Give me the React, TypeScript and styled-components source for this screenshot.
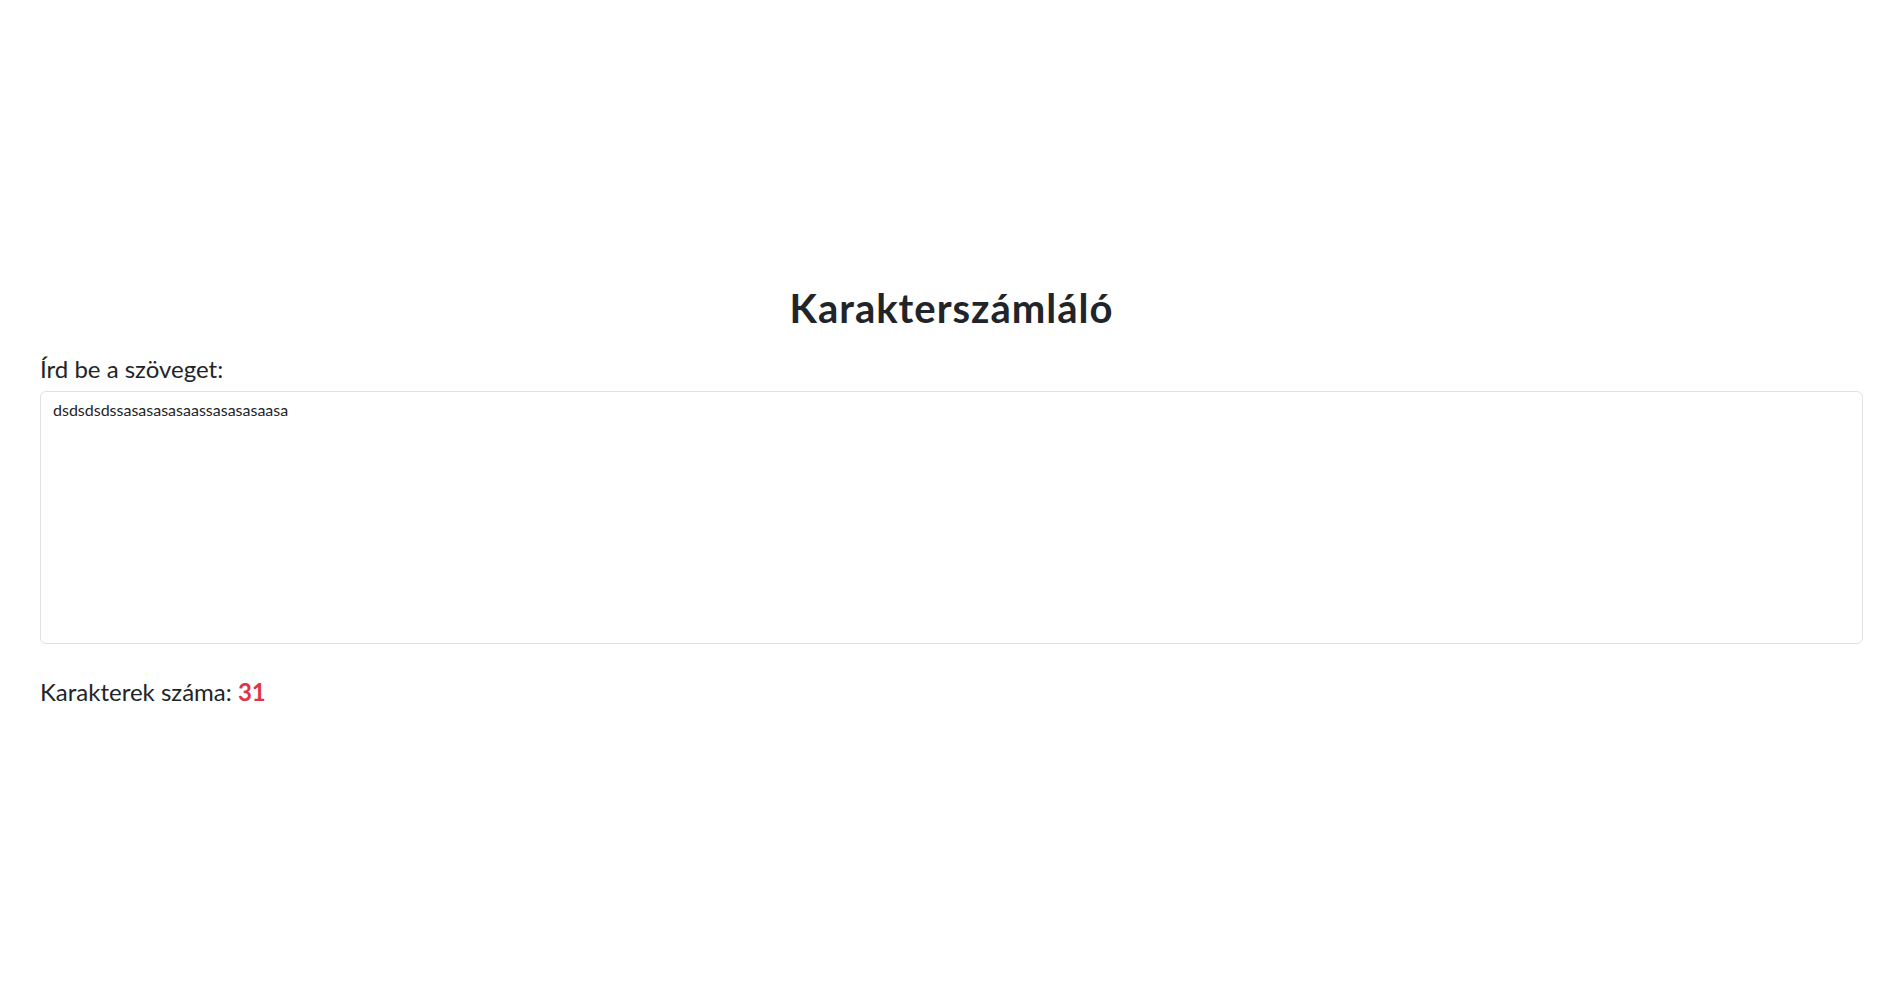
import { FC, useState } from 'react'
import styled, { createGlobalStyle } from 'styled-components'

const GlobalStyle = createGlobalStyle`
  html, body {
    margin: 0;
    padding: 0;
    background: #ffffff;
  }
  body {
    font-family: Lato, 'Noto Sans', sans-serif;
    color: #212529;
  }
  * {
    box-sizing: border-box;
  }
`

const App: FC = () => {
  const [text, setText] = useState('dsdsdsdssasasasasaassasasasaasa')

  return (
    <>
      <GlobalStyle />
      <Page>
        <Title>Karakterszámláló</Title>
        <Label htmlFor='szoveg'>Írd be a szöveget:</Label>
        <TextBox
          id='szoveg'
          value={text}
          onChange={e => setText(e.target.value)}
        />
        <Counter>
          Karakterek száma: <Count>{text.length}</Count>
        </Counter>
      </Page>
    </>
  )
}

export default App

const Page = styled.div`
  display: flex;
  flex-direction: column;
  padding: 284px 40px 0 40px;
`

const Title = styled.h1`
  margin: 0 0 19px 0;
  font-size: 40px;
  font-weight: 700;
  line-height: 48px;
  letter-spacing: 1px;
  text-align: center;
`

const Label = styled.label`
  font-size: 24px;
  line-height: 36px;
  margin-bottom: 4px;
`

const TextBox = styled.textarea`
  width: 100%;
  height: 253px;
  padding: 6px 12px;
  border: 1px solid #dee2e6;
  border-radius: 6px;
  font-family: inherit;
  font-size: 16px;
  line-height: 1.5;
  color: #212529;
  resize: none;
  outline: none;
`

const Counter = styled.p`
  margin: 30px 0 0 0;
  font-size: 24px;
  line-height: 36px;
`

const Count = styled.strong`
  color: #dc3545;
  font-weight: 700;
`
